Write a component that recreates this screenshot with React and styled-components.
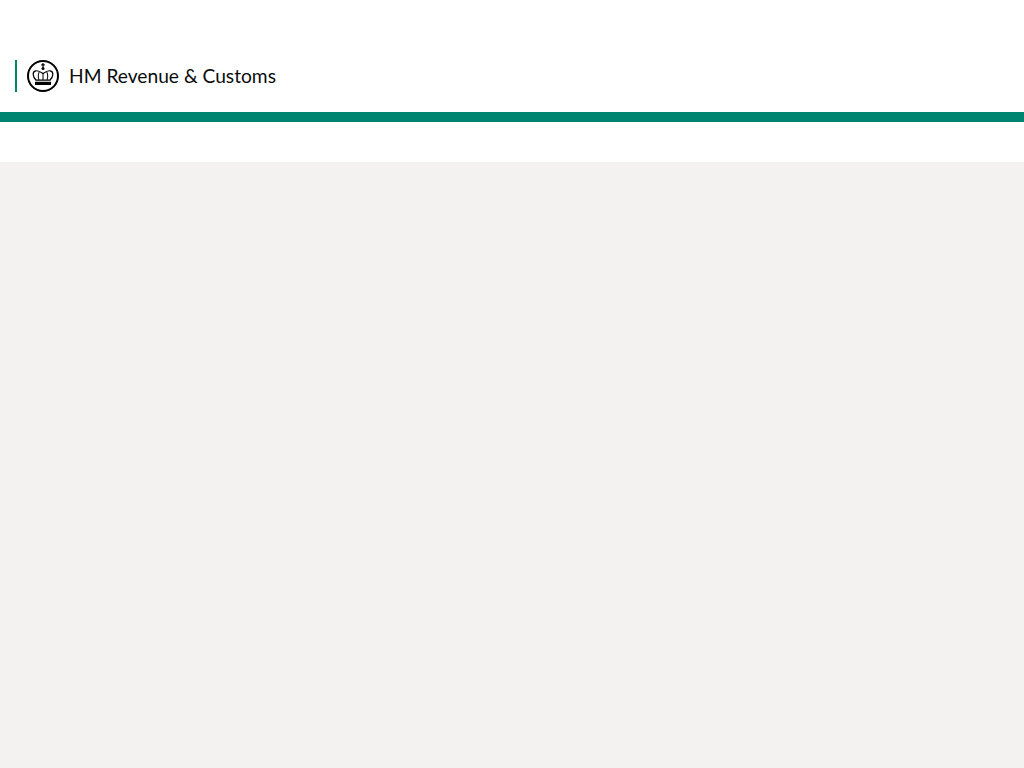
import { createGlobalStyle } from "styled-components";
import styled from "styled-components";

const GlobalStyle = createGlobalStyle`
    html, body {
        margin: 0;
        padding: 0;
        height: 100%;
        background: #f3f2f1;
    }
    #root {
        min-height: 100%;
    }
`

const Page = styled.div`
    min-height: 768px;
    display: flex;
    flex-direction: column;
    background: #f3f2f1;
`

const Header = styled.header`
    background: #fff;
    height: 112px;
    display: flex;
    align-items: flex-end;
    padding: 0 0 20px 15px;
    box-sizing: border-box;
`

const Organisation = styled.div`
    display: flex;
    align-items: center;
    height: 32px;
    padding-left: 9px;
    border-left: 2px solid #008670;
`

const OrganisationName = styled.span`
    margin-bottom: 2px;
    font-family: "Lato", "Noto Sans", sans-serif;
    font-size: 19.2px;
    color: #0b0c0c;
`

const Crest = styled.svg`
    width: 34px;
    height: 34px;
    margin-right: 9px;
    flex: none;
`

const Rule = styled.div`
    height: 10px;
    background: #008670;
`

const WhiteBand = styled.div`
    height: 40px;
    background: #fff;
`

function HmrcCrest() {
    return (
        <Crest viewBox="0 0 34 34">
            <circle cx="17" cy="17" r="15" fill="#fff" stroke="#000" strokeWidth="2" />
            <path d="M17 4v4.500M15.200 5.800h3.600" stroke="#000" strokeWidth="1.200" fill="none" />
            <circle cx="17" cy="9.500" r="1.500" fill="#000" />
            <path d="M10 21c-3.500-3.500-4-8.500-.2-9.200 3-.5 5.200 1.300 7.200 2.700 2-1.400 4.200-3.200 7.200-2.700 3.800.7 3.300 5.700-.2 9.200" fill="none" stroke="#000" strokeWidth="1.200" />
            <path d="M13.200 13c-1.200 2.600-1.200 5.500-.2 8M20.800 13c1.200 2.600 1.200 5.500.2 8M17 14.500v6.500" fill="none" stroke="#000" strokeWidth="1" />
            <path d="M9.500 20.500h15v1.300h-15zM9 22.800h16V26H9z" fill="#000" />
        </Crest>
    );
}

function App() {
    return (
        <Page>
            <GlobalStyle />
            <Header>
                <Organisation>
                    <HmrcCrest />
                    <OrganisationName>HM Revenue &amp; Customs</OrganisationName>
                </Organisation>
            </Header>
            <Rule />
            <WhiteBand />
        </Page>
    );
}

export default App;
